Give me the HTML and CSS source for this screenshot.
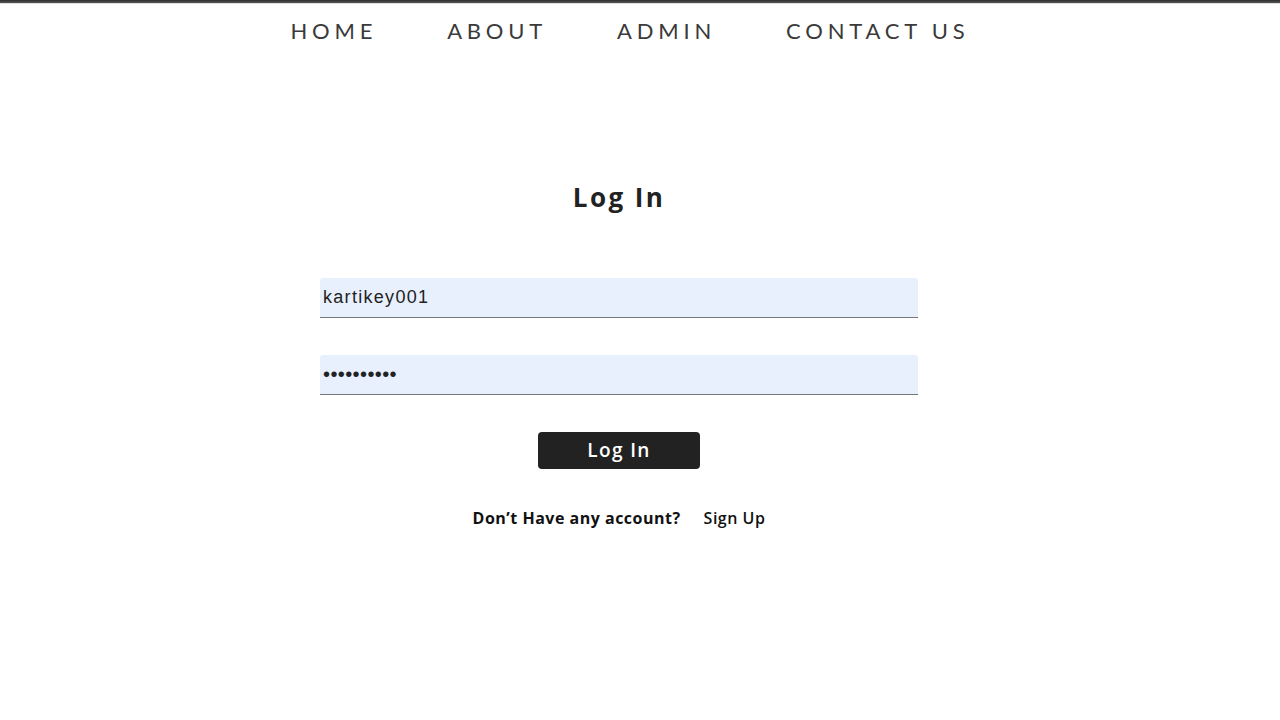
FILE: index.html
```html
<!DOCTYPE html>
<html>
<head>
<meta charset="utf-8">
<link rel="stylesheet" href="styles.css">
</head>
<body>
<div class="topbar"></div>
<nav class="nav">
  <a class="nav-link">HOME</a>
  <a class="nav-link">ABOUT</a>
  <a class="nav-link">ADMIN</a>
  <a class="nav-link">CONTACT US</a>
</nav>
<main class="login">
  <h1 class="title">Log In</h1>
  <form class="form">
    <input class="field" type="text" value="kartikey001">
    <input class="field pass" type="password" value="kartikey01">
    <button class="btn" type="button">Log In</button>
  </form>
  <p class="signup"><span class="q">Don’t Have any account?</span><a class="link">Sign Up</a></p>
</main>
</body>
</html>
```
FILE: styles.css
```css
html, body { margin: 0; padding: 0; background: #fff; }
body { font-family: "Liberation Sans", Arial, sans-serif; color: #222; }
.topbar { height: 3px; background: linear-gradient(#2e2e2e, #555); border-bottom: 1px solid #ddd; }
.nav { display: flex; justify-content: center; gap: 70px; padding-top: 15px; height: 42px; box-sizing: border-box; margin-right: 20px; }
.nav-link { font-family: "Lato", "Open Sans", sans-serif; font-size: 22px; letter-spacing: 4.8px; color: #3a3a3a; line-height: 24px; }
.login { display: flex; flex-direction: column; align-items: center; padding-top: 131px; margin-right: 42px; }
.title { margin: 0; font-family: "Open Sans", "Noto Sans", sans-serif; font-weight: 700; font-size: 26px; letter-spacing: 2.4px; line-height: 40px; color: #222; }
.form { display: flex; flex-direction: column; align-items: center; margin-top: 61px; }
.field { width: 598px; height: 40px; box-sizing: border-box; border: none; border-bottom: 1px solid #767676; background: #e8f0fe; border-radius: 3px 3px 0 0; font-family: "Liberation Sans", Arial, sans-serif; font-size: 18px; letter-spacing: 1.3px; padding: 0 3px; color: #222; margin: 0; outline: none; }
.pass { margin-top: 37px; font-size: 20px; letter-spacing: 0.4px; }
.btn { margin-top: 37px; width: 162px; height: 37px; background: #222; color: #fff; border: none; border-radius: 4px; font-family: "Open Sans", "Liberation Sans", sans-serif; font-size: 19px; font-weight: 600; letter-spacing: 1.4px; line-height: 1; padding: 0; }
.signup { margin: 38px 0 0 0; font-family: "Open Sans", sans-serif; font-size: 16px; letter-spacing: 0.5px; color: #111; display: flex; gap: 23px; }
.q { font-weight: 700; }
.link { font-weight: 600; }
```
